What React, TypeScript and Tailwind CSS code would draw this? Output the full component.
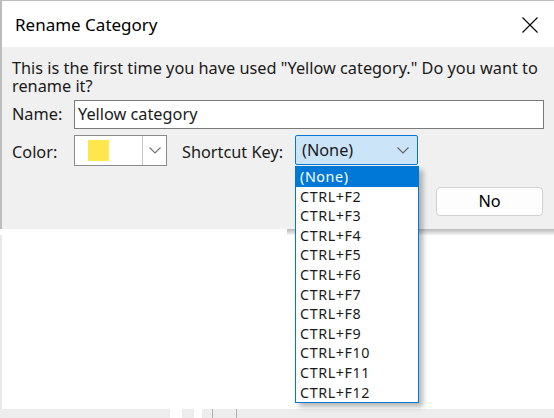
import React from "react";

const FONT = "font-['Noto_Sans','Open_Sans',sans-serif]";

const KEYS = [
  "(None)",
  "CTRL+F2",
  "CTRL+F3",
  "CTRL+F4",
  "CTRL+F5",
  "CTRL+F6",
  "CTRL+F7",
  "CTRL+F8",
  "CTRL+F9",
  "CTRL+F10",
  "CTRL+F11",
  "CTRL+F12",
];

function Chevron({ className = "" }: { className?: string }) {
  return (
    <svg width="12" height="7" viewBox="0 0 12 7" className={className}>
      <path d="M0.5 0.5 L6 6 L11.5 0.5" fill="none" stroke="currentColor" strokeWidth="1.1" />
    </svg>
  );
}

function ShortcutList() {
  return (
    <div className="absolute left-[295px] top-[166px] w-[124px] border border-[#0078d7] bg-white shadow-[4px_4px_5px_rgba(0,0,0,0.28)]">
      {KEYS.map((k, i) => (
        <div
          key={k}
          className={`h-[19.6px] pl-[4px] text-[14.3px] leading-[19.6px] tracking-[0.6px] ${
            i === 0 ? "bg-[#0078d7] text-white" : "text-[#1a1a1a]"
          }`}
        >
          {k}
        </div>
      ))}
    </div>
  );
}

export default function App() {
  return (
    <div className={`relative h-[418px] w-[554px] overflow-hidden bg-white ${FONT}`}>
      {/* dialog */}
      <div className="flex h-[229px] flex-col border-l-2 border-t border-[#bcbcbc]">
        <div className="flex h-[46px] items-center justify-between bg-white pl-[13px] pr-[16px]">
          <span className="pt-[2px] text-[17px] text-black">Rename Category</span>
          <svg width="16" height="16" viewBox="0 0 16 16" className="mt-[2px] text-black">
            <path d="M0.5 0.5 L15.5 15.5 M15.5 0.5 L0.5 15.5" stroke="currentColor" strokeWidth="1.1" />
          </svg>
        </div>

        <div className="flex flex-1 flex-col bg-[#f0f0f0] pl-[10px] pr-[8px] pt-[12px] text-[16.3px] text-[#1a1a1a]">
          <p className="leading-[18px]">
            This is the first time you have used "Yellow category." Do you want to rename it?
          </p>

          <div className="mt-[5px] flex h-[29px] items-center">
            <span className="w-[62px]">Name:</span>
            <div className="flex h-full w-[470px] items-center border border-[#7a7a7a] bg-white pl-[3px]">
              Yellow category
            </div>
          </div>

          <div className="mt-[6px] flex items-start">
            <span className="mt-[5px] w-[62px]">Color:</span>
            <div className="flex h-[31px] w-[93px] border border-[#8a8a8a] bg-white">
              <div className="flex flex-1 items-center pl-[13px]">
                <div className="h-[21px] w-[21px] bg-[#fde74c]" />
              </div>
              <div className="flex w-[24px] items-center justify-center border-l border-[#c4c4c4] text-[#707070]">
                <Chevron />
              </div>
            </div>
            <span className="ml-[15px] mt-[5px] w-[113px]">Shortcut Key:</span>
            <div className="flex h-[30px] w-[123px] items-center justify-between rounded-[2px] border border-[#0078d7] bg-[#cce4f7] pl-[6px] pr-[8px]">
              <span>(None)</span>
              <Chevron className="text-[#606060]" />
            </div>
          </div>

          <div className="mt-[21px] flex justify-end pr-[3px]">
            <div className="flex h-[29px] w-[107px] items-center justify-center rounded-[4px] border border-[#d0d0d0] bg-[#fdfdfd] text-black">
              No
            </div>
          </div>
        </div>
      </div>

      {/* app behind the dialog */}
      <div className="flex h-[6px]">
        <div className="w-[287px]" />
        <div className="flex-1 bg-gradient-to-b from-[#b8b8b8] to-[#f4f4f4]" />
      </div>
      <div className="flex h-[174px]">
        <div className="w-[2px] bg-[#e8e8e8]" />
        <div className="flex-1" />
      </div>
      <div className="flex h-[9px] bg-[#ededed]">
        <div className="ml-[170px] w-[12px] bg-white" />
        <div className="ml-[12px] w-[8px] bg-white" />
        <div className="ml-[10px] w-px bg-[#b0b0b0]" />
        <div className="ml-[23px] w-px bg-[#b0b0b0]" />
      </div>

      <ShortcutList />
    </div>
  );
}
